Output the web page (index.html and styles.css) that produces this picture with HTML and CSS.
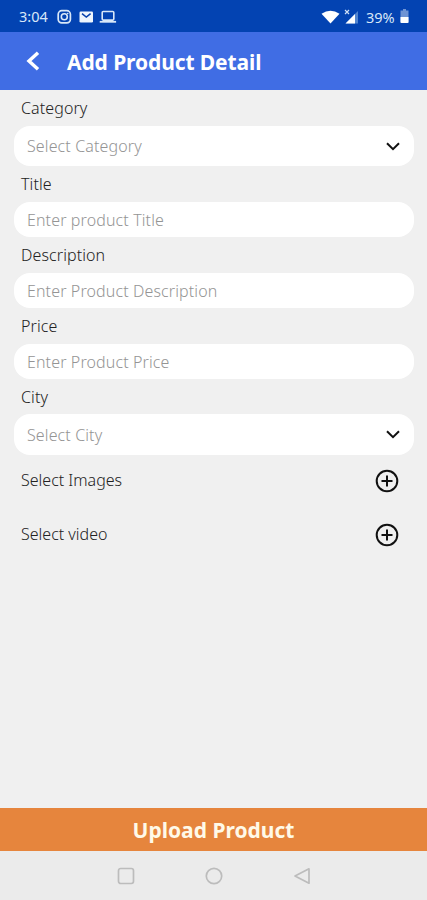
FILE: index.html
```html
<!DOCTYPE html>
<html lang="en">
<head>
<meta charset="utf-8">
<title>Add Product Detail</title>
<link rel="stylesheet" href="styles.css">
</head>
<body>
<div class="screen">
  <div class="status">
    <span class="clock">3:04</span>
    <svg class="status-left" width="62" height="16" viewBox="0 0 62 16" fill="none" stroke="#d8e7f8">
      <rect x="1.2" y="1.7" width="12.2" height="12.2" rx="3.6" stroke-width="1.7"/>
      <circle cx="7.3" cy="7.8" r="3" stroke-width="1.6"/>
      <circle cx="10.7" cy="4.5" r=".8" fill="#d8e7f8" stroke="none"/>
      <rect x="22.5" y="2.5" width="13.5" height="11" rx="1.3" fill="#eef5fd" stroke="none"/>
      <path d="M25 4.7l4.3 3.4 4.3-3.4" stroke="#0741ad" stroke-width="1.5"/>
      <rect x="45.2" y="2.5" width="11.6" height="8.6" rx="1" stroke-width="1.6"/>
      <path d="M42.7 12.8h16.4" stroke-width="1.8"/>
    </svg>
    <svg class="status-signal" width="40" height="16" viewBox="0 0 40 16">
      <path d="M.5 4.8Q9.5 -1.2 18.5 4.8L9.5 14.5z" fill="#fff"/>
      <path d="M37 2v12.5H24.5z" fill="#5285cf"/>
      <path d="M34 5v9.5h-9.5z" fill="#fff"/>
      <path d="M24 1l4 4M28 1l-4 4" stroke="#cfe0f6" stroke-width="1.2"/>
    </svg>
    <span class="percent">39%</span>
    <svg class="battery" width="9" height="15" viewBox="0 0 9 15">
      <path d="M3 0h3v1.5h2.5v12.2H.5V1.5H3z" fill="#6f94d4"/>
      <path d="M.5 8h8v5a1 1 0 0 1-1 1h-6a1 1 0 0 1-1-1z" fill="#fff"/>
    </svg>
  </div>
  <header class="appbar">
    <svg width="16" height="20" viewBox="0 0 16 20" fill="none" stroke="#fff" stroke-width="3.4"><path d="M13 1.8L4 10l9 8.2"/></svg>
    <h1 class="title">Add Product Detail</h1>
  </header>
  <main class="form">
    <div class="label"><span>Category</span></div>
    <div class="field select"><span>Select Category</span><svg class="chevron" width="14" height="9" viewBox="0 0 14 9"><path d="M1 1.2l6 6 6-6"/></svg></div>
    <div class="label"><span>Title</span></div>
    <div class="field"><span>Enter product Title</span></div>
    <div class="label"><span>Description</span></div>
    <div class="field"><span>Enter Product Description</span></div>
    <div class="label"><span>Price</span></div>
    <div class="field"><span>Enter Product Price</span></div>
    <div class="label label-city"><span>City</span></div>
    <div class="field select city"><span>Select City</span><svg class="chevron" width="14" height="9" viewBox="0 0 14 9"><path d="M1 1.2l6 6 6-6"/></svg></div>
    <div class="media"><span>Select Images</span><svg class="plus" width="24" height="24" viewBox="0 0 24 24"><circle cx="12" cy="12" r="10.3"/><path d="M6.5 12h11M12 6.5v11"/></svg></div>
    <div class="media"><span>Select video</span><svg class="plus" width="24" height="24" viewBox="0 0 24 24"><circle cx="12" cy="12" r="10.3"/><path d="M6.5 12h11M12 6.5v11"/></svg></div>
  </main>
  <div class="upload"><span>Upload Product</span></div>
  <nav class="nav">
    <svg width="18" height="18" viewBox="0 0 18 18"><rect x="1.5" y="1.5" width="15" height="15" rx="2.2"/></svg>
    <svg width="18" height="18" viewBox="0 0 18 18"><circle cx="9" cy="9" r="7.7"/></svg>
    <svg width="18" height="18" viewBox="0 0 18 18"><path d="M16 1.8v14.4L2 9z" stroke-linejoin="round"/></svg>
  </nav>
</div>
</body>
</html>
```
FILE: styles.css
```css
* { box-sizing: border-box; }
body { margin: 0; font-family: "Noto Sans", "Open Sans", sans-serif; }
svg { display: block; flex: none; }
.screen {
  width: 427px;
  height: 900px;
  display: flex;
  flex-direction: column;
  background: #f0f0f0;
  overflow: hidden;
}
.status {
  height: 32px;
  background: #0343b2;
  color: #d8e7f8;
  display: flex;
  align-items: center;
  padding: 1px 18px 0 19px;
  font-size: 14.5px;
}
.clock { width: 38px; margin-top: -1px; }
.status-signal { margin-left: auto; }
.percent { margin-left: 5px; width: 34px; font-size: 14.5px; }
.appbar {
  height: 58px;
  background: #406de4;
  display: flex;
  align-items: center;
  padding: 0 0 0 25px;
}
.title {
  margin: 1px 0 0 26px;
  color: #fff;
  font-size: 21px;
  font-weight: 700;
  letter-spacing: -0.1px;
  white-space: nowrap;
}
.form { flex: 1; padding: 0 13px 0 14px; }
.label {
  height: 36px;
  padding: 0 0 1px 7px;
  display: flex;
  align-items: center;
  font-size: 16px;
  font-weight: 300;
  letter-spacing: 0.1px;
  color: #222;
}
.label-city { height: 35px; padding-bottom: 0; }
.field {
  height: 35px;
  padding: 0 14px 0 13px;
  border-radius: 16px;
  background: #fff;
  color: #949494;
  font-size: 16px;
  font-weight: 300;
  letter-spacing: 0.12px;
  display: flex;
  align-items: center;
  justify-content: space-between;
  white-space: nowrap;
}
.select { height: 40px; }
.city { height: 41px; }
.chevron { fill: none; stroke: #111; stroke-width: 2; }
.media {
  height: 54px;
  padding: 0 15px 2px 7px;
  display: flex;
  align-items: center;
  justify-content: space-between;
  font-size: 16px;
  font-weight: 300;
  color: #222;
}
.media span { margin-top: -3px; }
.plus { fill: none; stroke: #111; stroke-width: 2; }
.upload {
  height: 43px;
  background: #e6853d;
  color: #fff9e8;
  display: flex;
  align-items: center;
  justify-content: center;
  font-size: 21px;
  font-weight: 700;
}
.nav {
  height: 49px;
  background: #ebebeb;
  display: flex;
  align-items: center;
  justify-content: center;
  gap: 70px;
}
.nav svg { fill: none; stroke: #bcbcbc; stroke-width: 1.7; }
```
